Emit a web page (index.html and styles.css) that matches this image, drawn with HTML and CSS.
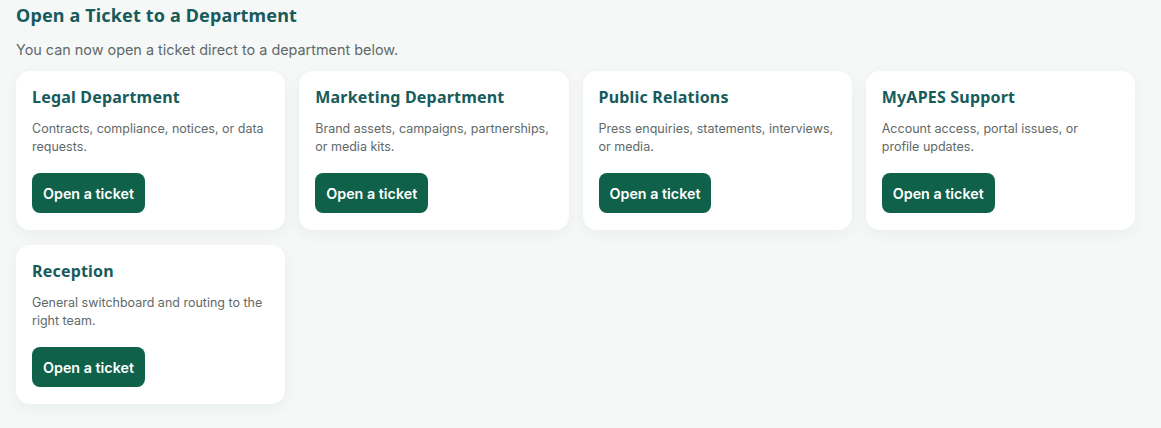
FILE: index.html
```html
<!DOCTYPE html>
<html lang="en">
<head>
<meta charset="utf-8">
<title>Open a Ticket to a Department</title>
<link rel="stylesheet" href="styles.css">
</head>
<body>
<main class="page">
  <h1 class="title">Open a Ticket to a Department</h1>
  <p class="intro">You can now open a ticket direct to a department below.</p>
  <div class="grid">
    <section class="card">
      <h2 class="card-title">Legal Department</h2>
      <p class="card-text">Contracts, compliance, notices, or data requests.</p>
      <a class="btn" href="#">Open a ticket</a>
    </section>
    <section class="card">
      <h2 class="card-title">Marketing Department</h2>
      <p class="card-text">Brand assets, campaigns, partnerships, or media kits.</p>
      <a class="btn" href="#">Open a ticket</a>
    </section>
    <section class="card">
      <h2 class="card-title">Public Relations</h2>
      <p class="card-text">Press enquiries, statements, interviews, or media.</p>
      <a class="btn" href="#">Open a ticket</a>
    </section>
    <section class="card">
      <h2 class="card-title">MyAPES Support</h2>
      <p class="card-text">Account access, portal issues, or profile updates.</p>
      <a class="btn" href="#">Open a ticket</a>
    </section>
    <section class="card">
      <h2 class="card-title">Reception</h2>
      <p class="card-text">General switchboard and routing to the right team.</p>
      <a class="btn" href="#">Open a ticket</a>
    </section>
  </div>
</main>
</body>
</html>
```

FILE: styles.css
```css
html, body {
  margin: 0;
  padding: 0;
  background: #f5f8f7;
}
body {
  font-family: Inter, "Liberation Sans", sans-serif;
  color: #5f6969;
}
.page {
  padding: 3px 26px 16px 16px;
}
.title {
  margin: 0;
  font-family: "Noto Sans", Inter, sans-serif;
  font-weight: 700;
  font-size: 18px;
  line-height: 24px;
  color: #175b5b;
  letter-spacing: 0.15px;
}
.intro {
  margin: 13px 0 0;
  font-size: 14.4px;
  line-height: 20px;
  color: #5f6969;
}
.grid {
  margin-top: 11px;
  display: grid;
  grid-template-columns: repeat(4, 1fr);
  column-gap: 14px;
  row-gap: 15px;
}
.card {
  background: #ffffff;
  border-radius: 14px;
  padding: 16px 16px 17px;
  box-shadow: 0 4px 14px rgba(30, 60, 55, 0.06);
  display: flex;
  flex-direction: column;
  align-items: flex-start;
}
.card-title {
  margin: 0;
  font-family: "Noto Sans", Inter, sans-serif;
  font-weight: 700;
  font-size: 16px;
  line-height: 20px;
  letter-spacing: 0.2px;
  color: #175b5b;
}
.card-text {
  margin: 13px 0 0;
  font-size: 12.5px;
  line-height: 18px;
  color: #5f6969;
}
.btn {
  margin-top: 17px;
  display: inline-flex;
  align-items: center;
  height: 40px;
  padding: 0 11px;
  box-sizing: border-box;
  border-radius: 8px;
  background: #10614a;
  color: #ffffff;
  font-weight: 600;
  font-size: 14.3px;
  text-decoration: none;
}
```
